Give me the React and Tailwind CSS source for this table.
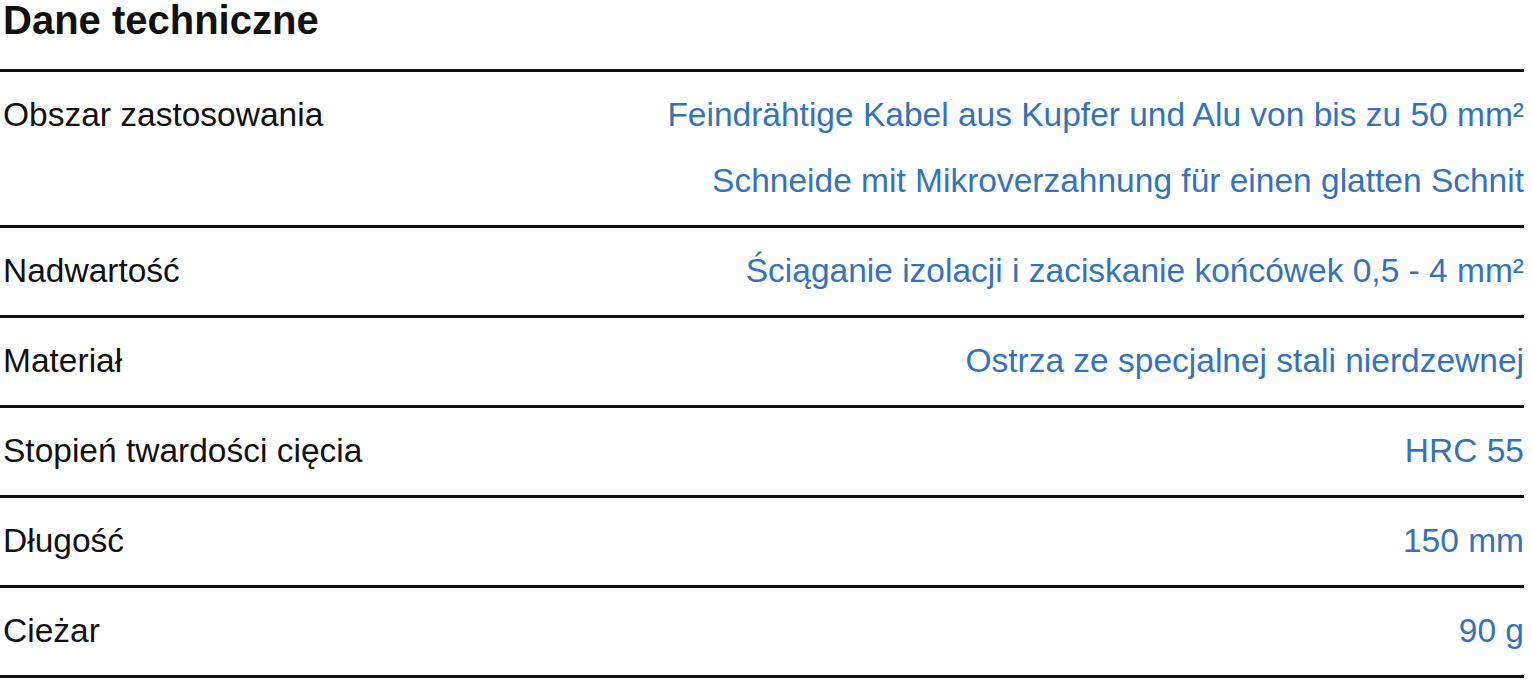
import React from 'react';

const rows = [
    { label: 'Obszar zastosowania', values: ['Feindrähtige Kabel aus Kupfer und Alu von bis zu 50 mm²', 'Schneide mit Mikroverzahnung für einen glatten Schnit'] },
    { label: 'Nadwartość', values: ['Ściąganie izolacji i zaciskanie końcówek 0,5 - 4 mm²'] },
    { label: 'Materiał', values: ['Ostrza ze specjalnej stali nierdzewnej'] },
    { label: 'Stopień twardości cięcia', values: ['HRC 55'] },
    { label: 'Długość', values: ['150 mm'] },
    { label: 'Cieżar', values: ['90 g'] },
];

const App = () => {
    return (
        <div className="w-[1524px] bg-white font-['Liberation_Sans',Arial,sans-serif] text-[#111]">
            <h2 className="h-[69px] pl-[3px] text-[40px] font-bold leading-[40px]">Dane techniczne</h2>
            <div className="border-b-[3px] border-[#111]">
                {rows.map((row) => (
                    <div key={row.label} className="flex justify-between border-t-[3px] border-[#111] pt-[10px] pb-[11px] text-[33.5px] leading-[66px]">
                        <div className="pl-[3px]">{row.label}</div>
                        <div className="flex flex-col items-end text-[#3572bd]">
                            {row.values.map((v) => (
                                <div key={v}>{v}</div>
                            ))}
                        </div>
                    </div>
                ))}
            </div>
        </div>
    );
};

export default App;
